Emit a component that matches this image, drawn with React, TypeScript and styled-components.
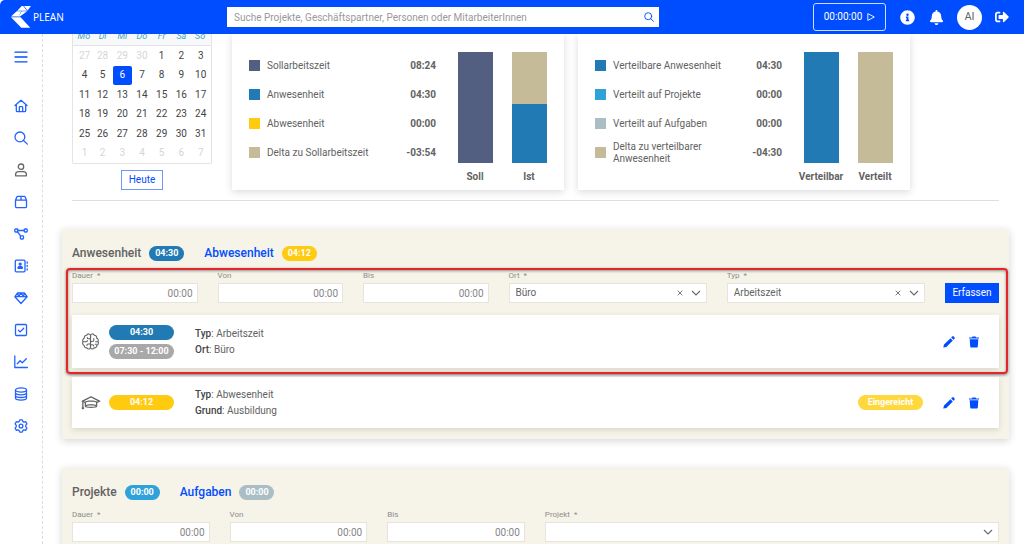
import React, { useId, useState } from 'react';
import styled, { createGlobalStyle, css } from 'styled-components';
import { FaInfoCircle, FaBell, FaSignOutAlt } from 'react-icons/fa';
import { LiaGraduationCapSolid } from 'react-icons/lia';

const c = {
  blue: '#004cff',
  text: '#626262',
  muted: '#8d8d8d',
  sand: '#c6bb98',
  steel: '#227ab4',
  sky: '#2fa2da',
  mist: '#abbec6',
  slate: '#535f80',
  yellow: '#ffcb11',
  panel: '#f6f3e8',
};

const Global = createGlobalStyle`
  *, *::before, *::after { box-sizing: border-box; }
  body {
    margin: 0;
    background: #fff;
    color: ${c.text};
    font: 10px/16px Roboto, "Liberation Sans", sans-serif;
  }
  button, input, select { font: inherit; color: inherit; border-radius: 0; margin: 0; }
  button { cursor: pointer; padding: 0; }
`;

const App = styled.div`
  display: flex;
  flex-direction: column;
  height: 100vh;
`;

/* ---------- header ---------- */

const Header = styled.header`
  display: grid;
  grid-template-columns: 216px minmax(0, 432px) 1fr;
  align-items: center;
  flex: 0 0 34px;
  padding: 0 15px 0 11px;
  background: ${c.blue};
  border-top-left-radius: 5px;
  color: #fff;
`;

const Logo = styled.a`
  display: flex;
  align-items: center;
  gap: 2px;
  color: #fff;
  text-decoration: none;
  font-family: 'Noto Sans', sans-serif;
  svg { display: block; }
`;

const Search = styled.form`
  display: flex;
  align-items: center;
  height: 20px;
  background: #fff;
  input {
    flex: 1;
    min-width: 0;
    height: 20px;
    padding: 0 7px;
    border: 0;
    background: none;
    outline: none;
    color: ${c.text};
    &::placeholder { color: #999; opacity: 1; }
  }
`;

const IconButton = styled.button<{ $color?: string; $w?: number }>`
  display: flex;
  align-items: center;
  justify-content: center;
  width: ${p => p.$w ?? 20}px;
  height: 20px;
  border: 0;
  background: none;
  color: ${p => p.$color ?? c.blue};
`;

const HeaderActions = styled.div`
  display: flex;
  align-items: center;
  justify-content: flex-end;
`;

const Timer = styled.button`
  display: flex;
  align-items: center;
  justify-content: center;
  gap: 5px;
  width: 73px;
  height: 28px;
  margin-right: 11px;
  border: 1px solid #cfdcff;
  border-radius: 3px;
  background: none;
  color: #fff;
`;

const Avatar = styled.button`
  width: 25px;
  height: 25px;
  margin: 0 13px 0 2px;
  border: 0;
  border-radius: 50%;
  background: #fff;
  color: ${c.text};
  font-size: 11px;
`;

/* ---------- frame ---------- */

const Body = styled.div`
  display: flex;
  flex: 1;
  min-height: 0;
`;

const Sidebar = styled.nav`
  display: flex;
  flex-direction: column;
  align-items: center;
  flex: 0 0 43px;
  gap: 12px;
  padding-top: 13px;
  border-right: 1px dashed #dcdcdc;
  button:first-child { margin-bottom: 17px; }
`;

const NavLink = styled.a<{ $active?: boolean }>`
  display: flex;
  align-items: center;
  justify-content: center;
  width: 20px;
  height: 20px;
  color: ${p => (p.$active ? '#666' : '#2262ff')};
`;

const Main = styled.main`
  flex: 1;
  min-width: 0;
  padding: 0 15px 0 19px;
  overflow: auto;
  scrollbar-width: none;
`;

const Summary = styled.section`
  display: flex;
  gap: 20px;
  margin: 0 10px;
  padding-bottom: 10px;
  border-bottom: 1px solid #dedede;
`;

/* ---------- calendar ---------- */

const CalendarColumn = styled.div`
  display: flex;
  flex-direction: column;
  align-items: center;
  flex: 0 0 140px;
  gap: 6px;
`;

const Calendar = styled.table`
  width: 140px;
  height: 130px;
  table-layout: fixed;
  border: 1px solid #e4e4e4;
  border-top: 0;
  border-radius: 0 0 2px 2px;
  border-collapse: separate;
  border-spacing: 0;
  text-align: center;
  th, td { padding: 0; }
  th {
    height: 12px;
    border-bottom: 1px solid #e4e4e4;
    background: #f7f8f9;
    color: #46a9c4;
    font-size: 9px;
    font-weight: 400;
    font-style: italic;
    line-height: 4px;
    vertical-align: top;
  }
  th:first-child, td:first-child { padding-left: 2px; }
  th:last-child, td:last-child { padding-right: 2px; }
`;

const Day = styled.button<{ $outside?: boolean; $selected?: boolean }>`
  display: block;
  width: 19px;
  height: 19px;
  margin: 0 auto;
  border: 0;
  border-radius: 2px;
  background: ${p => (p.$selected ? c.blue : 'transparent')};
  color: ${p => (p.$selected ? '#fff' : p.$outside ? '#d6d6d6' : '#444')};
`;

const TodayButton = styled.button`
  width: 42px;
  height: 20px;
  border: 1px solid #6f98ff;
  background: #fff;
  color: ${c.blue};
`;

/* ---------- statistic cards ---------- */

const Cards = styled.div`
  display: flex;
  flex: 1;
  gap: 14px;
`;

const Card = styled.article`
  display: flex;
  flex: 0 1 332px;
  justify-content: space-between;
  height: 156px;
  padding: 17px 17px 0;
  background: #fff;
  box-shadow: 0 2px 8px rgba(0, 0, 0, 0.15);
`;

const Legend = styled.ul`
  display: flex;
  flex-direction: column;
  flex: 0 0 187px;
  margin: 0;
  padding: 0;
  list-style: none;
`;

const LegendRow = styled.li`
  display: flex;
  align-items: center;
  gap: 7px;
  height: 29px;
  line-height: 12px;
  span { flex: 0 1 118px; }
  b { margin-left: auto; font-weight: 700; }
`;

const Swatch = styled.i<{ $color: string }>`
  flex: 0 0 11px;
  height: 11px;
  background: ${p => p.$color};
`;

const Chart = styled.div`
  display: flex;
  gap: 18px;
  padding-top: 1px;
`;

const BarColumn = styled.figure`
  display: flex;
  flex-direction: column;
  align-items: center;
  gap: 6px;
  width: 36px;
  margin: 0;
  figcaption { font-weight: 700; }
`;

const Bar = styled.div`
  display: flex;
  flex-direction: column;
  width: 35px;
  height: 111px;
`;

const Segment = styled.div<{ $color: string; $share: number }>`
  flex: ${p => p.$share} 0 0;
  background: ${p => p.$color};
`;

/* ---------- booking panels ---------- */

const Panel = styled.section`
  margin-top: 28px;
  padding: 14px 10px 11px;
  background: ${c.panel};
  box-shadow: 0 2px 8px rgba(0, 0, 0, 0.17);
  & + & { margin-top: 29px; }
`;

const Tabs = styled.div`
  display: flex;
  gap: 20px;
  height: 20px;
  margin-bottom: 9px;
`;

const Tab = styled.button<{ $active?: boolean }>`
  display: flex;
  align-items: center;
  gap: 8px;
  border: 0;
  background: none;
  color: ${p => (p.$active ? c.text : c.blue)};
  font-size: 12px;
  font-weight: 500;
`;

const Pill = styled.span<{ $color: string; $wide?: boolean }>`
  display: block;
  width: ${p => (p.$wide ? 65 : 35)}px;
  border-radius: 8px;
  background: ${p => p.$color};
  color: #fff;
  font-size: 9px;
  font-weight: 700;
  line-height: 15px;
  text-align: center;
`;

const Marked = styled.div`
  position: relative;
  &::after {
    content: '';
    position: absolute;
    inset: -4px -9px -6px -6px;
    border: 2px solid #e3262b;
    border-radius: 4px;
    box-shadow: 0 1px 3px rgba(0, 0, 0, 0.5), inset 0 1px 3px rgba(0, 0, 0, 0.4);
    pointer-events: none;
  }
`;

const FormRow = styled.form<{ $columns: string }>`
  display: grid;
  grid-template-columns: ${p => p.$columns};
  gap: 20px;
  align-items: end;
`;

const Field = styled.div`
  label {
    display: block;
    height: 11px;
    color: ${c.muted};
    font-size: 8px;
    line-height: 8px;
    white-space: pre;
  }
`;

const control = css`
  display: block;
  width: 100%;
  height: 20px;
  border: 1px solid #e6e4dc;
  background: #fff;
  outline: none;
`;

const TimeInput = styled.input`
  ${control}
  padding: 0 4px;
  text-align: right;
  &::placeholder { color: #858585; opacity: 1; }
`;

const SelectBox = styled.div`
  position: relative;
  select {
    ${control}
    appearance: none;
    padding: 0 42px 0 6px;
  }
`;

const SelectIcons = styled.div`
  position: absolute;
  inset: 0 6px 0 auto;
  display: flex;
  align-items: center;
  gap: 6px;
  pointer-events: none;
  button { pointer-events: auto; }
`;

const Submit = styled.button`
  height: 20px;
  border: 0;
  background: ${c.blue};
  color: #fff;
`;

const Entry = styled.article<{ $h: number; $gap: number }>`
  display: flex;
  align-items: center;
  height: ${p => p.$h}px;
  margin-top: ${p => p.$gap}px;
  padding: 0 15px 0 9px;
  background: #fff;
  box-shadow: 0 2px 6px rgba(70, 60, 30, 0.16);
`;

const EntryIcon = styled.span`
  display: flex;
  width: 28px;
`;

const Pills = styled.div`
  display: flex;
  flex-direction: column;
  gap: 4px;
  width: 86px;
`;

const Details = styled.p`
  flex: 1;
  margin: 0;
  b { font-weight: 500; color: #444; }
`;

const EntryActions = styled.div`
  display: flex;
  align-items: center;
  gap: 5px;
  ${Pill} { margin-right: 11px; }
`;

/* ---------- icons ---------- */

const Line = ({ children, size = 14 }: { children: React.ReactNode; size?: number }) => (
  <svg width={size} height={size} viewBox="0 0 14 14" fill="none" stroke="currentColor"
    strokeWidth="1.3" strokeLinecap="round" strokeLinejoin="round" aria-hidden="true">
    {children}
  </svg>
);

const nav: { label: string; active?: boolean; icon: React.ReactNode }[] = [
  { label: 'Start', icon: <><path d="M1 6.6 7 1.3l6 5.3M2.3 5.8v5.6c0 .7.5 1.2 1.2 1.2h7c.7 0 1.2-.5 1.2-1.2V5.8" /><path d="M5.3 12.4V8.5c0-.5.3-.8.8-.8h1.8c.5 0 .8.3.8.8v3.9" /></> },
  { label: 'Suche', icon: <><circle cx="5.9" cy="5.9" r="4.9" /><path d="m9.5 9.5 3.8 3.6" /></> },
  { label: 'Person', active: true, icon: <><circle cx="7" cy="3.7" r="2.7" /><path d="M1.6 12.8v-1.2c0-1.8 1.2-2.9 2.9-2.9h5c1.7 0 2.9 1.1 2.9 2.9v1.2z" /></> },
  { label: 'Pakete', icon: <path d="M1.5 5.2h11v6.2c0 .8-.5 1.3-1.3 1.3H2.8c-.8 0-1.3-.5-1.3-1.3zM1.5 5.2l1.200-3c.2-.5.6-.8 1.200-.8h6.200c.6 0 1 .3 1.200.8l1.200 3M7 1.400v3.800" /> },
  { label: 'Struktur', icon: <><rect x=".8" y="2" width="3" height="3" rx=".8" /><rect x="10.2" y="2" width="3" height="3" rx=".8" /><rect x="6.3" y="8.8" width="3.200" height="3.200" rx=".8" /><path d="M3.800 3.500h6.400M3.600 5l3 3.900" /></> },
  { label: 'Kontakte', icon: <><rect x="1.3" y="1.2" width="9.7" height="11.6" rx="1" /><circle cx="6.2" cy="5.1" r="1" fill="currentColor" /><path d="M4 9.300c0-1.300.8-1.800 2.200-1.800s2.200.5 2.200 1.800z" fill="currentColor" /><path d="M13.200 3v1.200M13.200 6.400v1.200M13.200 9.800V11" /></> },
  { label: 'Leistungen', icon: <path d="M3.600 2h6.800l2.700 3.700L7 12.500.9 5.700zM.9 5.700h12.200M3.600 2l1 3.700L7 2l2.400 3.700 1-3.700" /> },
  { label: 'Aufgaben', icon: <><rect x="1.5" y="1.5" width="11" height="11" rx="1" /><path d="m4.400 7.300 1.800 1.600 3.500-3.700" /></> },
  { label: 'Auswertung', icon: <path d="M.8 1v11.500h12.600M3.300 8.800l2.800-3 2.200 2 4-4" /> },
  { label: 'Daten', icon: <><ellipse cx="7" cy="3" rx="5.5" ry="2.1" /><path d="M1.500 3v8c0 1.100 2.500 2.100 5.500 2.100s5.500-1 5.500-2.100V3M1.500 5.800c0 1.100 2.500 2 5.500 2s5.500-.9 5.500-2M1.500 8.500c0 1.100 2.500 2 5.500 2s5.500-.9 5.500-2" /></> },
  { label: 'Einstellungen', icon: <><path d="m5.700.9-.5 1.500-1.200.7-1.600-.4-1.300 2.200L2.200 6.200v1.600L1.100 9.100l1.300 2.200 1.600-.4 1.200.7.500 1.500h2.600l.5-1.500 1.200-.7 1.600.4 1.300-2.200-1.100-1.300V6.200l1.100-1.300-1.300-2.200-1.600.4-1.200-.7L8.300.9z" /><circle cx="7" cy="7" r="1.9" /></> },
];

const Brain = () => (
  <svg width="19" height="19" viewBox="0 0 19 19" fill="none" stroke="currentColor" strokeWidth="1.100" strokeLinecap="round" strokeLinejoin="round" aria-hidden="true">
    <path d="M9.500 3.200C9 1.600 6.400 1.400 5.700 3.200 4 3.200 3 4.500 3.400 6 1.900 6.700 1.300 8.300 2 9.700c-.9 1.400-.3 3.100 1.200 3.700 0 1.600 1.200 2.600 2.700 2.500 1 1.700 3.300 1.500 3.600-.3z" />
    <path d="M9.500 3.200c.5-1.600 3.100-1.800 3.800 0 1.700 0 2.700 1.300 2.300 2.800 1.500.7 2.100 2.300 1.400 3.700.9 1.400.3 3.100-1.200 3.700 0 1.600-1.200 2.600-2.700 2.500-1 1.700-3.300 1.500-3.600-.3z" />
    <path d="M9.500 6.800H7.600c-.8 0-1.300-.5-1.300-1.300M9.500 12H7.300c-.9 0-1.400.6-1.400 1.400M2.200 9.700h3c.8 0 1.200-.5 1.200-1.200M9.500 9.500h1.900c.9 0 1.400-.5 1.400-1.400V6.600M16.800 9.700h-2.200M9.500 12.800h1.900c.8 0 1.300.4 1.300 1.200M14.300 12.200h1.200" />
  </svg>
);

const Pencil = () => (
  <svg width="12" height="12" viewBox="0 0 12 12" fill="currentColor" aria-hidden="true">
    <path d="m7.500 2.200 2.300 2.300-6.400 6.400-2.800.7c-.2 0-.3-.1-.3-.3l.7-2.700zM8.200 1.500l.9-.9c.5-.5 1.200-.5 1.700 0l.6.6c.5.500.5 1.200 0 1.700l-.9.900z" />
  </svg>
);

const Trash = () => (
  <svg width="12" height="12" viewBox="0 0 12 12" fill="currentColor" aria-hidden="true">
    <path d="M1 1.400h2.900l.5-.8h3.200l.5.800H11v1.100H1zM1.700 3.200h8.600l-.5 7.400c0 .600-.500 1-1.100 1H3.300c-.600 0-1.100-.400-1.100-1z" />
  </svg>
);

const Chevron = () => (
  <svg width="10" height="10" viewBox="0 0 10 10" fill="none" stroke="#6b6b6b" strokeWidth="1.2" aria-hidden="true">
    <path d="m1 3 4 4 4-4" />
  </svg>
);

/* ---------- data ---------- */

const weekdays = ['Mo', 'Di', 'Mi', 'Do', 'Fr', 'Sa', 'So'];
const days = [27, 28, 29, 30, ...Array.from({ length: 31 }, (_, i) => i + 1), 1, 2, 3, 4, 5, 6, 7];
const weeks = Array.from({ length: 6 }, (_, w) => days.slice(w * 7, w * 7 + 7));

type Stat = {
  rows: [string, string, string][];
  bars: { label: string; parts: [string, number][] }[];
};

const stats: Stat[] = [
  {
    rows: [
      [c.slate, 'Sollarbeitszeit', '08:24'],
      [c.steel, 'Anwesenheit', '04:30'],
      [c.yellow, 'Abwesenheit', '00:00'],
      [c.sand, 'Delta zu Sollarbeitszeit', '-03:54'],
    ],
    bars: [
      { label: 'Soll', parts: [[c.slate, 1]] },
      { label: 'Ist', parts: [[c.sand, 234], [c.steel, 270]] },
    ],
  },
  {
    rows: [
      [c.steel, 'Verteilbare Anwesenheit', '04:30'],
      [c.sky, 'Verteilt auf Projekte', '00:00'],
      [c.mist, 'Verteilt auf Aufgaben', '00:00'],
      [c.sand, 'Delta zu verteilbarer Anwesenheit', '-04:30'],
    ],
    bars: [
      { label: 'Verteilbar', parts: [[c.steel, 1]] },
      { label: 'Verteilt', parts: [[c.sand, 1]] },
    ],
  },
];

/* ---------- parts ---------- */

function TimeField({ label }: { label: string }) {
  const id = useId();
  return (
    <Field>
      <label htmlFor={id}>{label}</label>
      <TimeInput id={id} placeholder="00:00" />
    </Field>
  );
}

function SelectField({ label, option }: { label: string; option?: string }) {
  const id = useId();
  const [value, setValue] = useState(option ?? '');
  return (
    <Field>
      <label htmlFor={id}>{label}</label>
      <SelectBox>
        <select id={id} value={value} onChange={e => setValue(e.target.value)}>
          <option value="" />
          {option && <option>{option}</option>}
        </select>
        <SelectIcons>
          {value && (
            <IconButton type="button" $w={10} $color="#777" aria-label="Auswahl löschen" onClick={() => setValue('')}>
              <svg width="6" height="6" viewBox="0 0 6 6" stroke="currentColor"><path d="m.7.7 4.600 4.600M5.300.7.7 5.300" /></svg>
            </IconButton>
          )}
          <Chevron />
        </SelectIcons>
      </SelectBox>
    </Field>
  );
}

function Actions({ status }: { status?: string }) {
  return (
    <EntryActions>
      {status && <Pill $wide $color="#ffd83d">{status}</Pill>}
      <IconButton aria-label="Bearbeiten"><Pencil /></IconButton>
      <IconButton aria-label="Löschen"><Trash /></IconButton>
    </EntryActions>
  );
}

export default function TimeTracking() {
  return (
    <App>
      <Global />
      <Header>
        <Logo href="#">
          <svg width="20" height="22" viewBox="0 0 20 22" fill="#fff" aria-hidden="true">
            <path d="M10.800 0H20l-3.600 4.800H6.200zM5.700 5.300h4.500L7.800 10.600H0zM0 11.300h9.600l9.700 10.500h-9z" />
            <path d="M10.800 5.300h5.300L9 10.600H7.600z" />
            <path d="m12.600 0 3.800 4.800" stroke={c.blue} strokeWidth=".8" />
          </svg>
          PLEAN
        </Logo>
        <Search role="search" onSubmit={e => e.preventDefault()}>
          <input aria-label="Suche" placeholder="Suche Projekte, Geschäftspartner, Personen oder MitarbeiterInnen" />
          <IconButton aria-label="Suchen"><Line size={10}>{nav[1].icon}</Line></IconButton>
        </Search>
        <HeaderActions>
          <Timer>
            00:00:00
            <svg width="8" height="8" viewBox="0 0 8 8" fill="none" stroke="#fff" strokeWidth=".9"><path d="M.8.6v6.800L7.300 4z" /></svg>
          </Timer>
          <IconButton $color="#fff" aria-label="Info"><FaInfoCircle size={15} /></IconButton>
          <IconButton $color="#fff" $w={38} aria-label="Benachrichtigungen"><FaBell size={15} /></IconButton>
          <Avatar>AI</Avatar>
          <IconButton $color="#fff" $w={14} aria-label="Abmelden"><FaSignOutAlt size={14} /></IconButton>
        </HeaderActions>
      </Header>
      <Body>
        <Sidebar>
          <IconButton aria-label="Menü"><Line><path d="M1 2.200h12M1 7h12M1 11.800h12" /></Line></IconButton>
          {nav.map(n => (
            <NavLink key={n.label} href="#" aria-label={n.label} $active={n.active}><Line>{n.icon}</Line></NavLink>
          ))}
        </Sidebar>
        <Main>
          <Summary>
            <CalendarColumn>
              <Calendar>
                <thead><tr>{weekdays.map(d => <th key={d}>{d}</th>)}</tr></thead>
                <tbody>
                  {weeks.map((week, w) => (
                    <tr key={w}>
                      {week.map((d, i) => {
                        const n = w * 7 + i;
                        return <td key={d}><Day $outside={n < 4 || n > 34} $selected={n === 9}>{d}</Day></td>;
                      })}
                    </tr>
                  ))}
                </tbody>
              </Calendar>
              <TodayButton>Heute</TodayButton>
            </CalendarColumn>
            <Cards>
              {stats.map((s, i) => (
                <Card key={i}>
                  <Legend>
                    {s.rows.map(([color, label, value]) => (
                      <LegendRow key={label}><Swatch $color={color} /><span>{label}</span><b>{value}</b></LegendRow>
                    ))}
                  </Legend>
                  <Chart>
                    {s.bars.map(b => (
                      <BarColumn key={b.label}>
                        <Bar>{b.parts.map(([color, share]) => <Segment key={color} $color={color} $share={share} />)}</Bar>
                        <figcaption>{b.label}</figcaption>
                      </BarColumn>
                    ))}
                  </Chart>
                </Card>
              ))}
            </Cards>
          </Summary>

          <Panel>
            <Tabs>
              <Tab $active>Anwesenheit <Pill $color={c.steel}>04:30</Pill></Tab>
              <Tab>Abwesenheit <Pill $color={c.yellow}>04:12</Pill></Tab>
            </Tabs>
            <Marked>
              <FormRow $columns="19fr 19fr 19fr 30fr 30fr 54px" onSubmit={e => e.preventDefault()}>
                <TimeField label="Dauer  *" />
                <TimeField label="Von" />
                <TimeField label="Bis" />
                <SelectField label="Ort  *" option="Büro" />
                <SelectField label="Typ  *" option="Arbeitszeit" />
                <Submit>Erfassen</Submit>
              </FormRow>
              <Entry $h={53} $gap={12}>
                <EntryIcon><Brain /></EntryIcon>
                <Pills>
                  <Pill $wide $color={c.steel}>04:30</Pill>
                  <Pill $wide $color="#a8a8a8">07:30 - 12:00</Pill>
                </Pills>
                <Details><b>Typ</b>: Arbeitszeit<br /><b>Ort</b>: Büro</Details>
                <Actions />
              </Entry>
            </Marked>
            <Entry $h={51} $gap={9}>
              <EntryIcon><LiaGraduationCapSolid size={20} /></EntryIcon>
              <Pills><Pill $wide $color={c.yellow}>04:12</Pill></Pills>
              <Details><b>Typ</b>: Abwesenheit<br /><b>Grund</b>: Ausbildung</Details>
              <Actions status="Eingereicht" />
            </Entry>
          </Panel>

          <Panel>
            <Tabs>
              <Tab $active>Projekte <Pill $color={c.sky}>00:00</Pill></Tab>
              <Tab>Aufgaben <Pill $color={c.mist}>00:00</Pill></Tab>
            </Tabs>
            <FormRow $columns="10fr 10fr 10fr 33fr" onSubmit={e => e.preventDefault()}>
              <TimeField label="Dauer  *" />
              <TimeField label="Von" />
              <TimeField label="Bis" />
              <SelectField label="Projekt  *" />
            </FormRow>
          </Panel>
        </Main>
      </Body>
    </App>
  );
}
